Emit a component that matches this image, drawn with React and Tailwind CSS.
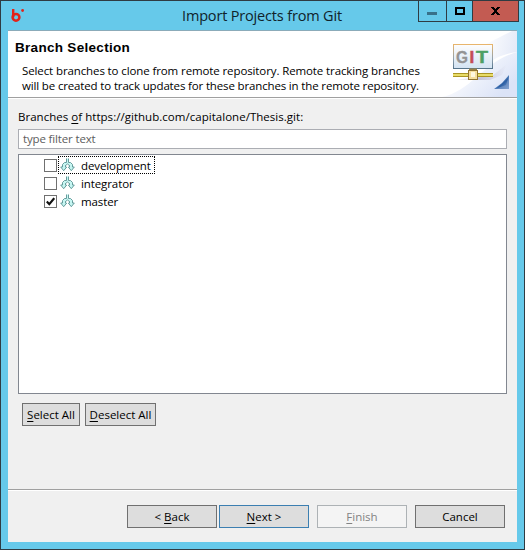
import React from "react";

function AppLogo() {
  return (
    <svg width="14" height="14" viewBox="0 0 14 14" className="block">
      <path d="M2.2 0V8.2" stroke="#e2231a" strokeWidth="2.4" fill="none" />
      <circle cx="5" cy="8.3" r="3.4" stroke="#e2231a" strokeWidth="2.5" fill="none" />
      <circle cx="11.6" cy="1.5" r="1.4" fill="#e2231a" />
    </svg>
  );
}

function WindowButtons() {
  return (
    <div className="ml-auto mr-[5px] flex h-[21px] border border-t-0 border-[#2f3b42]">
      <div className="w-[28px] border-r border-[#2f3b42] pt-[11px] pl-2">
        <div className="h-[3px] w-[10px] bg-[#38718a]" />
      </div>
      <div className="w-[26px] border-r border-[#2f3b42] pt-[6px] pl-2">
        <div className="h-2 w-[10px] border-2 border-black" />
      </div>
      <div className="flex w-[45px] bg-[#c35b52] pt-[6px] pl-[18px]">
        <svg width="9" height="8" viewBox="0 0 9 8" shapeRendering="crispEdges">
          <path d="M0 0H3V1H4V2H5V1H6V0H9V1H8V2H7V3H6V5H7V6H8V7H9V8H6V7H5V6H4V7H3V8H0V7H1V6H2V5H3V3H2V2H1V1H0Z" fill="#000" />
        </svg>
      </div>
    </div>
  );
}

function GitBanner() {
  return (
    <svg width="75" height="66" viewBox="0 0 75 66" className="block shrink-0">
      <defs>
        <linearGradient id="sky" x1="0" y1="0" x2="1" y2=".6">
          <stop offset=".25" stopColor="#fff" />
          <stop offset="1" stopColor="#dbe3f7" />
        </linearGradient>
        <linearGradient id="arc" x1="0" y1="0" x2="1" y2=".2">
          <stop offset="0" stopColor="#fff" />
          <stop offset="1" stopColor="#e6ebf8" />
        </linearGradient>
        <linearGradient id="screen" x1="0" y1="0" x2="0" y2="1">
          <stop offset="0" stopColor="#fdfdfe" />
          <stop offset="1" stopColor="#d3e3f2" />
        </linearGradient>
        <linearGradient id="frame" x1="0" y1="0" x2="0" y2="1">
          <stop offset="0" stopColor="#e8b56c" />
          <stop offset=".6" stopColor="#8fa0ae" />
          <stop offset="1" stopColor="#56748a" />
        </linearGradient>
        <linearGradient id="corner" x1="0" y1="0" x2="1" y2="1">
          <stop offset=".35" stopColor="#9fc4e6" />
          <stop offset=".6" stopColor="#2a5da3" />
          <stop offset="1" stopColor="#8caad5" />
        </linearGradient>
        <linearGradient id="shade" x1="0" y1="0" x2="1" y2="0">
          <stop offset="0" stopColor="#b9b2c8" stopOpacity="0" />
          <stop offset=".5" stopColor="#aaa3be" stopOpacity=".6" />
          <stop offset="1" stopColor="#b9b2c8" stopOpacity="0" />
        </linearGradient>
      </defs>
      <rect width="75" height="66" fill="#fff" />
      <path d="M0 66C30 60 42 30 75 21V66Z" fill="url(#sky)" />
      <path d="M42 14C54 8 64 3 70 0H75V21C61 23 53 27 46 33Z" fill="url(#arc)" />
      <path d="M10 49L50 45L65 33L60 44L48 49Z" fill="url(#shade)" />
      <rect x="11.5" y="13.5" width="39" height="24" fill="url(#screen)" stroke="url(#frame)" />
      <g fontFamily="Liberation Sans, Arial, sans-serif" fontWeight="bold" fontSize="17">
        <text x="14" y="32" fill="#949494" stroke="#949494" strokeWidth=".3" textLength="12" lengthAdjust="spacingAndGlyphs">G</text>
        <text x="27.5" y="32" fill="#c44c56" stroke="#c44c56" strokeWidth=".5">I</text>
        <text x="34" y="32" fill="#4da065" stroke="#4da065" strokeWidth=".5" textLength="12" lengthAdjust="spacingAndGlyphs">T</text>
      </g>
      <path d="M27 38.5h8" stroke="#98824b" strokeWidth="2" />
      <path d="M11 42.5h40M11 45.5h40" stroke="#aa9424" />
      <path d="M11 44h40" stroke="#e8dc68" strokeWidth="2" />
      <rect x="26.5" y="39.5" width="9" height="9" fill="#f6df9e" stroke="#927432" />
      <rect x="29" y="41" width="4" height="5" fill="#fff7df" />
      <path d="M67 44V58H52L60 52Z" fill="url(#corner)" />
      <path d="M53 58H67V45L64 54Z" fill="#7e9dcc" opacity=".65" />
    </svg>
  );
}

function BranchIcon() {
  return (
    <svg width="15" height="14" viewBox="0 0 15 14" className="block shrink-0">
      <path
        d="M6.500 .5V4.500H4.500L2.500 6.500V9H.7L3.700 12.700L6.700 9H5.500V7.500H9.500V9H8.300L11.300 12.700L14.300 9H12.500V6.500L10.500 4.500H8.500V.5"
        fill="#c6f6f2"
        stroke="#5f9797"
        strokeWidth=".95"
      />
      <path d="M6 8.500V7L7.500 5.800L9 7V8.500Z" fill="#fff" />
      <path d="M5.500 7.500L7.500 6L9.500 7.500" fill="none" stroke="#5f9797" strokeWidth=".9" />
    </svg>
  );
}

function BranchRow({ name, checked, focused }) {
  return (
    <div className="flex h-[18px] items-center pl-[25px]">
      <div className="flex h-[13px] w-[13px] shrink-0 items-center justify-center border border-[#707070] bg-white">
        {checked && (
          <svg width="9" height="9" viewBox="0 0 9 9">
            <path d="M.8 4.500L3.300 7.200L8.200 1.200" fill="none" stroke="#111" strokeWidth="2.100" />
          </svg>
        )}
      </div>
      <div
        className={
          focused
            ? "ml-px flex h-[18px] w-[97px] items-center border border-dotted border-black pl-px"
            : "ml-px flex h-[18px] w-[97px] items-center border border-transparent pl-px"
        }
      >
        <BranchIcon />
        <span className="ml-[6px] pt-px leading-[15px] tracking-[-0.1px]">{name}</span>
      </div>
    </div>
  );
}

function Button({ className, children }) {
  return (
    <div className={"flex h-[23px] items-center justify-center border pt-px leading-4 " + className}>
      <span>{children}</span>
    </div>
  );
}

const Key = ({ children }) => <span className="underline underline-offset-2">{children}</span>;

export default function App() {
  return (
    <div className="flex h-[550px] w-[525px] flex-col overflow-hidden border border-[#2f3b42] bg-[#66c9ea] px-[7px] font-['Open_Sans','Noto_Sans',sans-serif] text-[11.5px] whitespace-nowrap text-black">
      <div className="-mr-[7px] flex h-[29px] shrink-0">
        <div className="pt-2 pl-[3px]"><AppLogo /></div>
        <div className="ml-[157px] pt-1 text-[14.5px] leading-[22px] tracking-[-0.17px] text-[#10232b]">Import Projects from Git</div>
        <WindowButtons />
      </div>
      <div className="h-px shrink-0 bg-[#8babb9]" />
      <div className="flex h-[511px] w-[509px] shrink-0 flex-col bg-[#f0f0f0]">
        <header className="flex h-[67px] shrink-0 border-b border-[#a0a0a0] bg-white">
          <div className="w-[434px] pt-[9px]">
            <h1 className="pl-[7px] font-['Liberation_Sans',Arial,sans-serif] text-[13.5px] leading-4 font-bold tracking-[0.3px]">Branch Selection</h1>
            <p className="pt-[7px] pl-[14px] leading-[15px]">
              <span className="block tracking-[-0.11px]">Select branches to clone from remote repository. Remote tracking branches</span>
              <span className="block tracking-[-0.15px]">will be created to track updates for these branches in the remote repository.</span>
            </p>
          </div>
          <GitBanner />
        </header>
        <div className="h-px shrink-0 bg-white" />
        <main className="flex h-[390px] shrink-0 flex-col px-[10px] pt-[10px]">
          <div className="h-[20px] leading-4 tracking-[0.03px]">Branches <Key>o</Key>f https://github.com/capitalone/Thesis.git:</div>
          <div className="h-[20px] shrink-0 border border-[#abadb3] bg-white pl-1 leading-[18px] tracking-[-0.15px] text-[#5d5d5d]">type filter text</div>
          <div className="mt-[5px] h-[240px] shrink-0 border border-[#828790] bg-white pt-px">
            <BranchRow name="development" focused />
            <BranchRow name="integrator" />
            <BranchRow name="master" checked />
          </div>
          <div className="flex gap-[5px] pt-[9px] pl-1">
            <Button className="w-[58px] border-[#707070] bg-[#ddd]"><Key>S</Key>elect All</Button>
            <Button className="w-[71px] border-[#707070] bg-[#ddd]"><Key>D</Key>eselect All</Button>
          </div>
        </main>
        <div className="h-[2px] shrink-0 border-t border-[#a0a0a0] bg-white" />
        <footer className="flex pt-[14px] pl-[119px]">
          <Button className="w-[90px] border-[#707070] bg-[#ddd]">&lt; <Key>B</Key>ack</Button>
          <Button className="ml-[2px] w-[90px] border-[#3c7fb1] bg-[#ddd]"><Key>N</Key>ext &gt;</Button>
          <Button className="ml-2 w-[90px] border-[#adb2b5] bg-[#f4f4f4] text-[#838383]"><Key>F</Key>inish</Button>
          <Button className="ml-2 w-[90px] border-[#707070] bg-[#ddd]">Cancel</Button>
        </footer>
      </div>
    </div>
  );
}
